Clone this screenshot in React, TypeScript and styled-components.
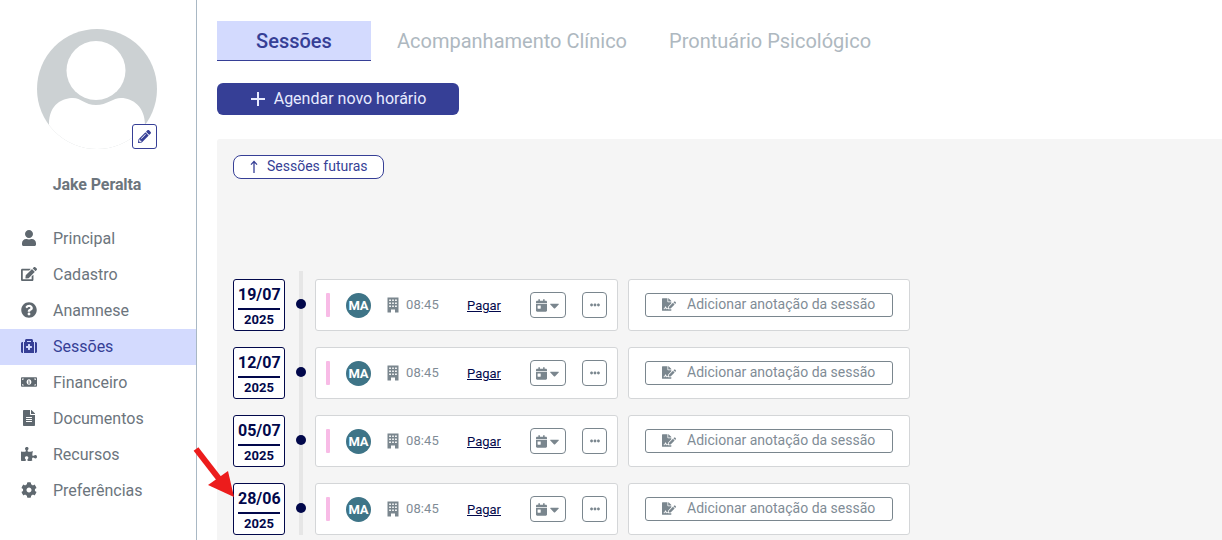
import React from "react";
import styled, { createGlobalStyle } from "styled-components";
import {
  FaUser, FaEdit, FaQuestionCircle, FaMedkit, FaMoneyBillAlt, FaFileAlt, FaPuzzlePiece, FaCog,
  FaPencilAlt, FaCalendarDay, FaCaretDown, FaEllipsisH, FaFileSignature,
} from "react-icons/fa";

const Global = createGlobalStyle`
  html, body { margin: 0; padding: 0; background: #fff; height: 100%; overflow: hidden; }
  body { font-family: Roboto, "Liberation Sans", sans-serif; }
`;

const Page = styled.div`
  position: relative;
  display: flex;
  width: 1222px;
  height: 540px;
  overflow: hidden;
`;
const Sidebar = styled.aside`
  flex: 0 0 197px;
  box-sizing: border-box;
  border-right: 1px solid #a9b8c4;
  padding-top: 29px;
`;
const AvatarWrap = styled.div`
  position: relative;
  width: 120px;
  height: 120px;
  margin-left: 37px;
`;
const EditBtn = styled.div`
  position: absolute;
  right: 0;
  bottom: 0;
  width: 25px;
  height: 25px;
  box-sizing: border-box;
  background: #fff;
  border: 1px solid #363f96;
  border-radius: 3px;
  color: #363f96;
  display: flex;
  align-items: center;
  justify-content: center;
  font-size: 13px;
`;
const Name = styled.div`
  margin-top: 26px;
  text-align: center;
  font-size: 16px;
  font-weight: 700;
  line-height: 20px;
  color: #6c757d;
  letter-spacing: -0.1px;
  padding-right: 2px;
`;
const Nav = styled.nav`
  margin-top: 26px;
  display: flex;
  flex-direction: column;
`;
const NavItem = styled.div<{ $active?: boolean }>`
  box-sizing: border-box;
  height: 36px;
  display: flex;
  align-items: center;
  padding: 0 0 2px 21px;
  gap: 16px;
  font-size: 16px;
  background: ${(p) => (p.$active ? "#d3dafe" : "transparent")};
  color: ${(p) => (p.$active ? "#363f96" : "#6c757d")};
  svg { flex: 0 0 16px; width: 16px; height: 16px; color: ${(p) => (p.$active ? "#363f96" : "#5f686f")}; }
`;
const Main = styled.main`
  flex: 1;
  min-width: 0;
  padding: 21px 0 0 20px;
  display: flex;
  flex-direction: column;
`;
const Tabs = styled.div`
  display: flex;
  height: 40px;
`;
const Tab = styled.div<{ $active?: boolean }>`
  box-sizing: border-box;
  height: 40px;
  display: flex;
  align-items: center;
  justify-content: center;
  font-size: 20px;
  font-weight: ${(p) => (p.$active ? 500 : 400)};
  width: ${(p) => (p.$active ? "154px" : "auto")};
  margin-right: ${(p) => (p.$active ? "26px" : "42px")};
  background: ${(p) => (p.$active ? "#d3dafe" : "transparent")};
  color: ${(p) => (p.$active ? "#363f96" : "#aeb8c0")};
  border-bottom: ${(p) => (p.$active ? "1px solid #363f96" : "none")};
`;
const Schedule = styled.button`
  margin: 22px 0 0;
  width: 242px;
  height: 32px;
  border: none;
  border-radius: 6px;
  background: #363f96;
  color: #e8ebff;
  font-family: inherit;
  font-size: 16px;
  display: flex;
  align-items: center;
  justify-content: center;
  gap: 8px;
  padding: 0 0 2px 0;
  svg { width: 16px; height: 16px; margin-top: 2px; }
`;
const Panel = styled.section`
  margin-top: 24px;
  flex: 1;
  background: #f5f5f5;
  padding: 16px 0 0 16px;
  border-top-left-radius: 3px;
`;
const FuturePill = styled.div`
  box-sizing: border-box;
  width: 151px;
  height: 24px;
  border: 1px solid #363f96;
  border-radius: 8px;
  background: #fff;
  color: #363f96;
  font-size: 14px;
  display: flex;
  align-items: center;
  gap: 8px;
  padding: 0 0 2px 15px;
  svg { width: 10px; height: 14px; flex: none; margin-top: 2px; }
`;
const Timeline = styled.div`
  position: relative;
  margin-top: 92px;
  padding-top: 8px;
  display: flex;
  flex-direction: column;
  gap: 16px;
  &::before {
    content: "";
    position: absolute;
    left: 66px;
    top: 0;
    bottom: 0;
    width: 4px;
    background: #e6e6e6;
  }
`;
const Row = styled.div`
  position: relative;
  display: flex;
  align-items: stretch;
  height: 52px;
`;
const DateBox = styled.div`
  box-sizing: border-box;
  width: 52px;
  background: #fff;
  border: 1px solid #02084b;
  border-radius: 3px;
  color: #02084b;
  font-weight: 700;
  display: flex;
  flex-direction: column;
  align-items: center;
  padding-top: 5px;
`;
const Day = styled.div`
  font-size: 16px;
  line-height: 19px;
  width: 42px;
  text-align: center;
  padding-bottom: 4px;
  border-bottom: 2px solid #02084b;
`;
const Year = styled.div`
  font-size: 13px;
  line-height: 15px;
  margin-top: 2px;
`;
const DotCol = styled.div`
  width: 30px;
  display: flex;
  align-items: center;
  justify-content: center;
  padding: 0 0 2px 2px;
  box-sizing: border-box;
  z-index: 1;
`;
const Dot = styled.span`
  width: 10px;
  height: 10px;
  border-radius: 50%;
  background: #02084b;
`;
const Card = styled.div`
  box-sizing: border-box;
  position: relative;
  z-index: 1;
  background: #fff;
  border: 1px solid #d4d6d8;
  border-radius: 3px;
`;
const SessionCard = styled(Card)`
  width: 303px;
  display: flex;
  align-items: center;
  padding-left: 10px;
`;
const Tag = styled.span`
  width: 4px;
  height: 24px;
  border-radius: 1px;
  background: #f8bbe6;
`;
const Initials = styled.span`
  margin-left: 16px;
  width: 25px;
  height: 25px;
  border-radius: 50%;
  background: #3e7487;
  color: #fff;
  font-size: 13px;
  font-weight: 700;
  display: flex;
  align-items: center;
  justify-content: center;
`;
const BuildingIcon = styled.svg`
  margin-left: 15px;
  width: 14px;
  height: 16px;
  color: #7a868e;
`;
const Time = styled.span`
  margin-left: 6px;
  padding-bottom: 2px;
  width: 33px;
  font-size: 13px;
  letter-spacing: 0.1px;
  color: #7f8c96;
`;
const Pay = styled.a`
  margin-left: 28px;
  padding-top: 1px;
  width: 34px;
  font-size: 13px;
  color: #02084b;
  text-decoration: underline;
`;
const OutlineBtn = styled.span`
  box-sizing: border-box;
  height: 26px;
  border: 1px solid #7a868e;
  border-radius: 4px;
  background: #fff;
  color: #7a868e;
  display: flex;
  align-items: center;
  justify-content: center;
`;
const CalBtn = styled(OutlineBtn)`
  width: 36px;
  margin-left: 29px;
  svg:first-child { width: 11px; height: 13px; margin-right: 1px; }
  svg:last-child { width: 13px; height: 15px; margin-right: -1px; }
`;
const MoreBtn = styled(OutlineBtn)`
  width: 25px;
  margin-left: 16px;
  svg { width: 10px; height: 10px; }
`;
const NoteCard = styled(Card)`
  width: 282px;
  margin-left: 10px;
  display: flex;
  align-items: center;
  padding-left: 16px;
`;
const NoteBtn = styled.div`
  box-sizing: border-box;
  width: 248px;
  height: 24px;
  margin-bottom: 1px;
  border: 1px solid #7a868e;
  border-radius: 3px;
  color: #7f8c96;
  font-size: 14px;
  display: flex;
  align-items: center;
  padding: 0 0 1px 16px;
  gap: 11px;
  svg { width: 14px; height: 13px; color: #7a868e; flex: none; }
`;
const ArrowMark = styled.svg`
  position: absolute;
  left: 190px;
  top: 444px;
  width: 50px;
  height: 60px;
`;

const navItems = [
  { label: "Principal", Icon: FaUser },
  { label: "Cadastro", Icon: FaEdit },
  { label: "Anamnese", Icon: FaQuestionCircle },
  { label: "Sessões", Icon: FaMedkit, active: true },
  { label: "Financeiro", Icon: FaMoneyBillAlt },
  { label: "Documentos", Icon: FaFileAlt },
  { label: "Recursos", Icon: FaPuzzlePiece },
  { label: "Preferências", Icon: FaCog },
];
const sessions = [
  { day: "19/07", year: "2025" },
  { day: "12/07", year: "2025" },
  { day: "05/07", year: "2025" },
  { day: "28/06", year: "2025" },
];

export default function App() {
  return (
    <Page>
      <Global />
      <Sidebar>
        <AvatarWrap>
          <svg width="120" height="120" viewBox="0 0 120 120" aria-hidden="true">
            <circle cx="60" cy="60" r="60" fill="#ccd1d3" />
            <clipPath id="av"><circle cx="60" cy="60" r="60" /></clipPath>
            <g clipPath="url(#av)">
              <circle cx="59" cy="41.5" r="29.5" fill="#fff" />
              <path d="M12 95 C12 75 26 69 36 69 C44 69 48 76 59 76 C70 76 76 69 84 69 C96 69 108 78 108 96 L108 120 L12 120 Z" fill="#fff" />
            </g>
          </svg>
          <EditBtn><FaPencilAlt /></EditBtn>
        </AvatarWrap>
        <Name>Jake Peralta</Name>
        <Nav>
          {navItems.map(({ label, Icon, active }) => (
            <NavItem key={label} $active={active}>
              <Icon />
              {label}
            </NavItem>
          ))}
        </Nav>
      </Sidebar>
      <Main>
        <Tabs>
          <Tab $active>Sessões</Tab>
          <Tab>Acompanhamento Clínico</Tab>
          <Tab>Prontuário Psicológico</Tab>
        </Tabs>
        <Schedule>
          <svg viewBox="0 0 16 16" aria-hidden="true">
            <path d="M8 1v14M1 8h14" stroke="currentColor" strokeWidth="2" fill="none" />
          </svg>
          Agendar novo horário
        </Schedule>
        <Panel>
          <FuturePill>
            <svg viewBox="0 0 10 14" aria-hidden="true">
              <path d="M5 13V2M2 4.6 5 1.4l3 3.2" stroke="currentColor" strokeWidth="1.3" fill="none" />
            </svg>
            Sessões futuras
          </FuturePill>
          <Timeline>
            {sessions.map((s) => (
              <Row key={s.day}>
                <DateBox>
                  <Day>{s.day}</Day>
                  <Year>{s.year}</Year>
                </DateBox>
                <DotCol><Dot /></DotCol>
                <SessionCard>
                  <Tag />
                  <Initials>MA</Initials>
                  <BuildingIcon viewBox="0 0 14 16" aria-hidden="true">
                    <path
                      fill="currentColor"
                      fillRule="evenodd"
                      d="M1.5 0.5h11v15H9v-3H5v3H1.5zM3.2 2.4v1.7h1.7V2.4zM6.2 2.4v1.7h1.6V2.4zM9.1 2.4v1.7h1.7V2.4zM3.2 5.4v1.7h1.7V5.4zM6.2 5.4v1.7h1.6V5.4zM9.1 5.4v1.7h1.7V5.4zM3.2 8.4v1.7h1.7V8.4zM6.2 8.4v1.7h1.6V8.4zM9.1 8.4v1.7h1.7V8.4z"
                    />
                  </BuildingIcon>
                  <Time>08:45</Time>
                  <Pay>Pagar</Pay>
                  <CalBtn><FaCalendarDay /><FaCaretDown /></CalBtn>
                  <MoreBtn><FaEllipsisH /></MoreBtn>
                </SessionCard>
                <NoteCard>
                  <NoteBtn><FaFileSignature />Adicionar anotação da sessão</NoteBtn>
                </NoteCard>
              </Row>
            ))}
          </Timeline>
        </Panel>
      </Main>
      <ArrowMark viewBox="0 0 50 60" aria-hidden="true">
        <path d="M6 5 L30 36" stroke="#ec1c1c" strokeWidth="6" fill="none" />
        <path d="M38 27 L44 53 L18 41 Z" fill="#ec1c1c" />
      </ArrowMark>
    </Page>
  );
}
